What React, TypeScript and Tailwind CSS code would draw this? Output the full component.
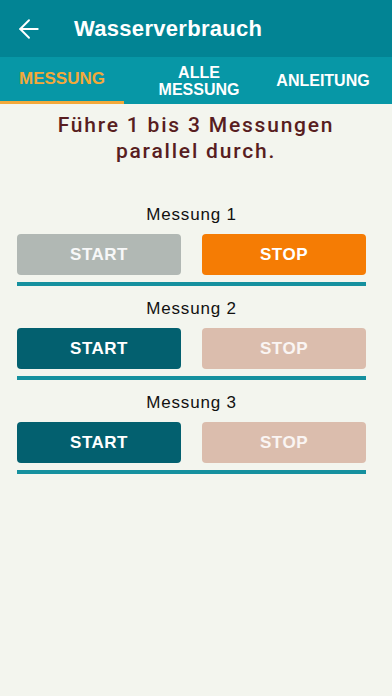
import { ArrowLeft } from "lucide-react";

const rows = [
  { label: "Messung 1", running: true },
  { label: "Messung 2", running: false },
  { label: "Messung 3", running: false },
];

function Row({ label, running }: { label: string; running: boolean }) {
  return (
    <div className="flex flex-col items-center pl-[17px] pr-[26px]">
      <div className="h-[22px] text-[17px] leading-[22px] tracking-[0.8px] text-[#111]">
        {label}
      </div>
      <div className="mt-[8px] grid w-full grid-cols-2 gap-[21px]">
        <button
          className={
            running
              ? "h-[41px] rounded-[4px] bg-[#b1b8b4] text-[17px] font-bold tracking-[0.5px] text-white/90"
              : "h-[41px] rounded-[4px] bg-[#03606f] text-[17px] font-bold tracking-[0.5px] text-white"
          }
        >
          START
        </button>
        <button
          className={
            running
              ? "h-[41px] rounded-[4px] bg-[#f57c04] text-[17px] font-bold tracking-[0.5px] text-white"
              : "h-[41px] rounded-[4px] bg-[#dbbdad] text-[17px] font-bold tracking-[0.5px] text-white/85"
          }
        >
          STOP
        </button>
      </div>
      <div className="mt-[7px] h-[4px] w-full bg-[#15909e]" />
    </div>
  );
}

export default function App() {
  return (
    <div
      className="flex h-[696px] w-[392px] flex-col bg-[#f3f5ee]"
      style={{ fontFamily: "'Liberation Sans', Arial, sans-serif" }}
    >
      <div className="flex h-[57px] items-center bg-[#028494] text-white">
        <ArrowLeft className="ml-[14px] h-[30px] w-[30px]" strokeWidth={1.5} />
        <div className="ml-[30px] text-[22px] font-bold tracking-[0.3px]">Wasserverbrauch</div>
      </div>
      <div className="flex h-[47px] bg-[#0797a6] text-white">
        <div className="flex w-[124px] flex-col">
          <div className="flex flex-1 items-center justify-center text-[17px] font-bold text-[#f3a93a]">
            MESSUNG
          </div>
          <div className="h-[3px] bg-[#f3a93a]" />
        </div>
        <div className="flex w-[150px] items-center justify-center text-center text-[16px] font-bold leading-[17px]">
          ALLE
          <br />
          MESSUNG
        </div>
        <div className="flex flex-1 items-center justify-center pr-[20px] text-[16px] font-bold">
          ANLEITUNG
        </div>
      </div>
      <div className="mt-[8px] text-center font-['Roboto',sans-serif] text-[21px] font-medium leading-[26px] tracking-[1.8px] text-[#581d21]">
        Führe 1 bis 3 Messungen
        <br />
        parallel durch.
      </div>
      <div className="mt-[40px] flex flex-col gap-[12px]">
        {rows.map((r) => (
          <Row key={r.label} label={r.label} running={r.running} />
        ))}
      </div>
    </div>
  );
}
